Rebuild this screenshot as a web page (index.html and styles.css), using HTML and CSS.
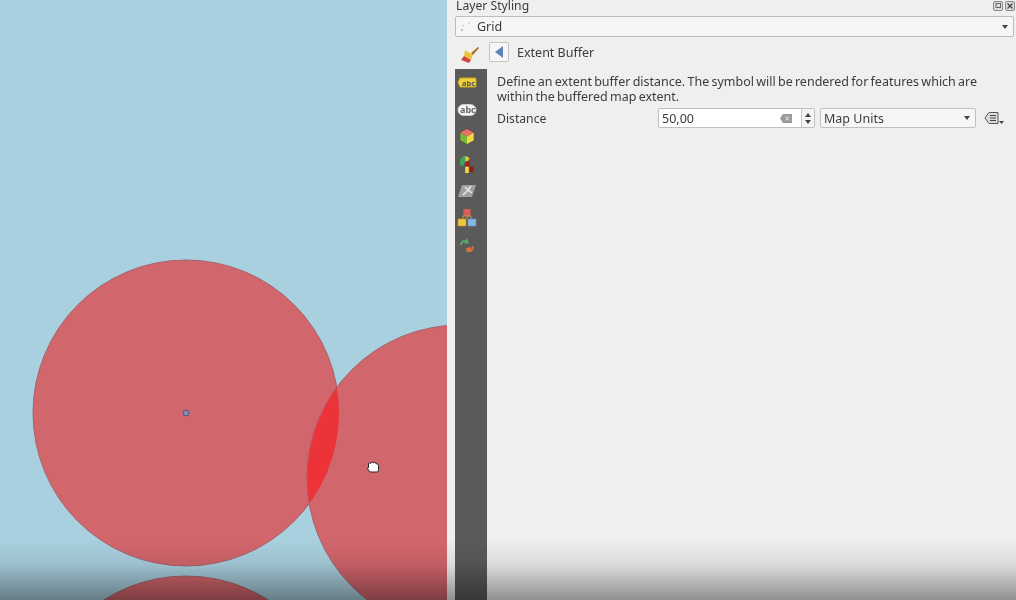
FILE: index.html
```html
<!DOCTYPE html>
<html lang="en">
<head>
  <meta charset="UTF-8">
  <title>Layer Styling</title>
  <link rel="stylesheet" href="styles.css">
</head>
<body>
  <div class="app">
    <!-- map canvas -->
    <div class="map">
      <svg class="map-svg" width="447" height="600" viewBox="0 0 447 600">
        <defs>
          <clipPath id="firstCircle"><circle cx="186" cy="413" r="153"/></clipPath>
        </defs>
        <circle cx="186" cy="413" r="153" fill="#d2666d" stroke="#a8626a"/>
        <circle cx="460" cy="478" r="153" fill="#d2666d" stroke="#a8626a"/>
        <circle cx="186" cy="729" r="153" fill="#d2666d" stroke="#a8626a"/>
        <circle cx="460" cy="478" r="153" fill="#ec3339" stroke="#c8505a" clip-path="url(#firstCircle)"/>
        <circle cx="186" cy="413" r="3" fill="#8a86b8" stroke="#4a5a7a"/>
        <path transform="translate(1 -3)" d="M367.5 470.5v-3.500q0-1 1-1t1 .5q.5-1.500 1.500-1.500t1.300 1q1-1 2-.5t.8 1.500q1-.5 1.700 0t.7 1.500v4q0 1.500-1 2.500h-7.500q-1.500-1-2.500-4z" fill="#fff" stroke="#222"/>
      </svg>
    </div>

    <!-- styling dock -->
    <div class="dock">
      <div class="dock-title">
        <span>Layer Styling</span>
        <span class="title-btns">
          <svg width="10" height="10" viewBox="0 0 10 10"><rect x=".5" y=".5" width="9" height="9" rx="1.500" fill="#ddd" stroke="#888"/><rect x="3" y="2.500" width="4.500" height="4" fill="none" stroke="#666"/></svg>
          <svg width="10" height="10" viewBox="0 0 10 10"><rect x=".5" y=".5" width="9" height="9" rx="1.500" fill="#ddd" stroke="#888"/><path d="M2.500 2.500l5 5M7.500 2.500l-5 5" stroke="#444" stroke-width="1.300"/></svg>
        </span>
      </div>

      <div class="layer-combo">
        <svg class="grid-dots" width="12" height="10" viewBox="0 0 12 10"><circle cx="2" cy="8" r="1" fill="#aaa"/><circle cx="3" cy="3.500" r=".8" fill="#bbb"/><circle cx="9" cy="1" r=".8" fill="#bbb"/></svg>
        <span>Grid</span>
        <span class="arrow"></span>
      </div>

      <div class="crumb-row">
        <svg class="brush" width="20" height="18" viewBox="0 0 20 18">
          <path d="M11 7l7-6 1 1-6 7z" fill="#a9722c"/>
          <path d="M5 4l8 5-2 5-7-4z" fill="#e8c53a"/>
          <path d="M4 10l7 4-2 3-8-3z" fill="#d0443c"/>
        </svg>
        <button class="back-btn"><span class="back-arrow"></span></button>
        <span class="crumb-label">Extent Buffer</span>
      </div>

      <div class="body-row">
        <div class="side-tabs">
          <div class="tab"><svg width="20" height="13" viewBox="0 0 20 13"><path d="M3 2h15a1 1 0 0 1 1 1v7a1 1 0 0 1-1 1H3L1 6.500z" fill="#f0d040" stroke="#c8a818"/><text x="5" y="9.500" class="tab-txt" fill="#555">abc</text></svg></div>
          <div class="tab"><svg width="20" height="14" viewBox="0 0 20 14"><rect x="1" y="1.500" width="18" height="11" rx="5.500" fill="#f4f4f4" stroke="#ccc"/><text x="3" y="10" class="tab-txt2" fill="#666">abc</text></svg></div>
          <div class="tab"><svg width="18" height="19" viewBox="0 0 20 20"><path d="M10 1l8 4.500-8 4.500-8-4.500z" fill="#e8706a"/><path d="M2 5.500l8 4.500v9l-8-4.500z" fill="#78b838"/><path d="M18 5.500l-8 4.500v9l8-4.500z" fill="#f0d840"/><path d="M10 1l8 4.500v9l-8 4.500-8-4.500v-9z" fill="none" stroke="#444" stroke-width=".8"/></svg></div>
          <div class="tab"><svg width="18" height="20" viewBox="0 0 20 22"><path d="M2 8a6 6 0 0 1 6-6v7l-3 5a6 6 0 0 1-3-6z" fill="#3fa35c"/><path d="M8 2a6 6 0 0 1 5 3l-4 5-1-1z" fill="#e0c83a"/><rect x="8" y="8" width="5" height="6" fill="#a81c1c"/><rect x="8" y="14" width="4" height="7" fill="#f0d840"/><rect x="13" y="14" width="4" height="6" fill="#8c1818"/></svg></div>
          <div class="tab"><svg width="20" height="14" viewBox="0 0 20 14"><path d="M5 1h14l-4 12H1z" fill="#a0a0a0"/><path d="M8 3l3 3-5 5M14 2l-3 4 4 3" fill="none" stroke="#e8e8e8" stroke-width="1.500"/></svg></div>
          <div class="tab"><svg width="20" height="20" viewBox="0 0 20 20"><rect x="6.500" y="1" width="7" height="7" fill="#d8605a"/><path d="M6 8v4M14 8v4M6 8h8M10 8v3" stroke="#d09048" fill="none"/><rect x="1" y="11" width="8" height="7" fill="#f0c83c" stroke="#b89030" stroke-width=".6"/><rect x="11" y="11" width="8" height="7" fill="#88b4e0" stroke="#6890b8" stroke-width=".6"/></svg></div>
          <div class="tab"><svg width="18" height="16" viewBox="0 0 18 16"><path d="M2 8a5 5 0 0 1 6-5l1-2 2 5-5 1 1-2a3 3 0 0 0-3 3z" fill="#5ca86a"/><path d="M16 10a5 5 0 0 1-6 5l-1 1-1-5 5-1-1 2a3 3 0 0 0 2-3z" fill="#d8703c"/></svg></div>
        </div>

        <div class="form-area">
          <p class="desc">Define an extent buffer distance. The symbol will be rendered for features which are within the buffered map extent.</p>
          <div class="field-row">
            <label class="field-label">Distance</label>
            <div class="spin">
              <span class="spin-value">50,00</span>
              <svg class="clear-icon" width="12" height="9" viewBox="0 0 12 9"><path d="M3 0h9v9H3L0 4.500z" fill="#9a9a9a"/><path d="M5.500 2.500l3.500 4M9 2.500l-3.500 4" stroke="#eee"/></svg>
              <span class="spin-btns"><i class="up"></i><i class="down"></i></span>
            </div>
            <div class="unit-combo">
              <span>Map Units</span>
              <span class="arrow"></span>
            </div>
            <svg class="override" width="20" height="14" viewBox="0 0 20 14"><path d="M1 7l4-5.500h9v11H5z" fill="#ddd" stroke="#555"/><path d="M6 4.500h6M6 7h6M6 9.500h6" stroke="#444"/><path d="M15 10h5l-2.500 3z" fill="#444"/></svg>
          </div>
        </div>
      </div>
    </div>

    <div class="fade"></div>
  </div>
</body>
</html>
```

FILE: styles.css
```css
/* Layer styling dock */
body {
  margin: 0;
  font-family: "Noto Sans", "Open Sans", sans-serif;
  font-size: 12.5px;
  color: #3c3c3c;
  overflow: hidden;
}
.app {
  position: relative;
  display: flex;
  width: 1016px;
  height: 600px;
  overflow: hidden;
  background-color: #efefef;
  filter: blur(0.35px);
}
.map {
  width: 447px;
  height: 600px;
  flex-shrink: 0;
  background-color: #a9d0df;
}
.map-svg {
  display: block;
}
.dock {
  flex: 1;
  display: flex;
  flex-direction: column;
  padding-left: 8px;
  padding-right: 2px;
  min-width: 0;
}
.dock-title {
  display: flex;
  justify-content: space-between;
  height: 16px;
  line-height: 12px;
  font-size: 12.2px;
  margin-left: 1px;
  margin-right: -1px;
}
.title-btns {
  display: flex;
  gap: 2px;
  padding-top: 1px;
}
.layer-combo {
  display: flex;
  align-items: center;
  height: 21px;
  box-sizing: border-box;
  border: 1px solid #bdbdbd;
  border-radius: 2px;
  background-color: #f6f6f6;
  padding: 0 5px 0 4px;
}
.grid-dots {
  margin-right: 5px;
}
.arrow {
  margin-left: auto;
  width: 0;
  height: 0;
  border-left: 3.5px solid transparent;
  border-right: 3.5px solid transparent;
  border-top: 4px solid #444;
}
.crumb-row {
  display: flex;
  align-items: center;
  height: 32px;
  box-sizing: border-box;
  padding-bottom: 2px;
}
.brush {
  margin-top: 6px;
  margin-left: 5px;
  margin-right: 9px;
}
.back-btn {
  display: flex;
  align-items: center;
  justify-content: center;
  width: 20px;
  height: 20px;
  padding: 0;
  border: 1px solid #c4c4c4;
  border-radius: 2px;
  background-color: #f6f6f6;
}
.back-arrow {
  width: 0;
  height: 0;
  border-top: 6px solid transparent;
  border-bottom: 6px solid transparent;
  border-right: 8px solid #5b86bd;
}
.crumb-label {
  margin-left: 8px;
}
.body-row {
  flex: 1;
  display: flex;
}
.side-tabs {
  width: 32px;
  flex-shrink: 0;
  box-sizing: border-box;
  padding-right: 8px;
  background-color: #5a5a5a;
}
.tab {
  display: flex;
  align-items: center;
  justify-content: center;
  height: 27px;
}
.tab-txt {
  font-size: 7.5px;
  font-weight: bold;
}
.tab-txt2 {
  font-size: 9px;
  font-weight: bold;
}
.form-area {
  flex: 1;
  padding: 5px 10px 0 10px;
}
.desc {
  margin: 0 0 3px;
  width: 490px;
  line-height: 15px;
  word-spacing: -1px;
}
.field-row {
  display: flex;
  align-items: center;
  height: 22px;
}
.field-label {
  width: 161px;
  font-size: 12.2px;
}
.spin {
  display: flex;
  align-items: center;
  width: 157px;
  height: 20px;
  box-sizing: border-box;
  border: 1px solid #c0c0c0;
  border-radius: 2px;
  background-color: #fff;
  padding-left: 3px;
}
.clear-icon {
  margin-left: auto;
  margin-right: 9px;
}
.spin-btns {
  display: flex;
  flex-direction: column;
  align-items: center;
  justify-content: center;
  gap: 3px;
  width: 12px;
  height: 100%;
  border-left: 1px solid #c8c8c8;
  background-color: #f4f4f4;
}
.spin-btns i {
  width: 0;
  height: 0;
  border-left: 3px solid transparent;
  border-right: 3px solid transparent;
}
.spin-btns .up {
  border-bottom: 4px solid #444;
}
.spin-btns .down {
  border-top: 4px solid #444;
}
.unit-combo {
  display: flex;
  align-items: center;
  width: 156px;
  height: 20px;
  margin-left: 5px;
  box-sizing: border-box;
  border: 1px solid #c0c0c0;
  border-radius: 2px;
  background-color: #f6f6f6;
  padding: 0 5px 0 3px;
}
.override {
  margin-left: 8px;
}
/* dark band along the bottom edge of the video frame */
.fade {
  position: absolute;
  left: 0;
  right: 0;
  bottom: 0;
  height: 60px;
  background: linear-gradient(to bottom, rgba(0, 0, 0, 0), rgba(0, 0, 0, 0.08) 40%, rgba(0, 0, 0, 0.4));
  pointer-events: none;
}
```
